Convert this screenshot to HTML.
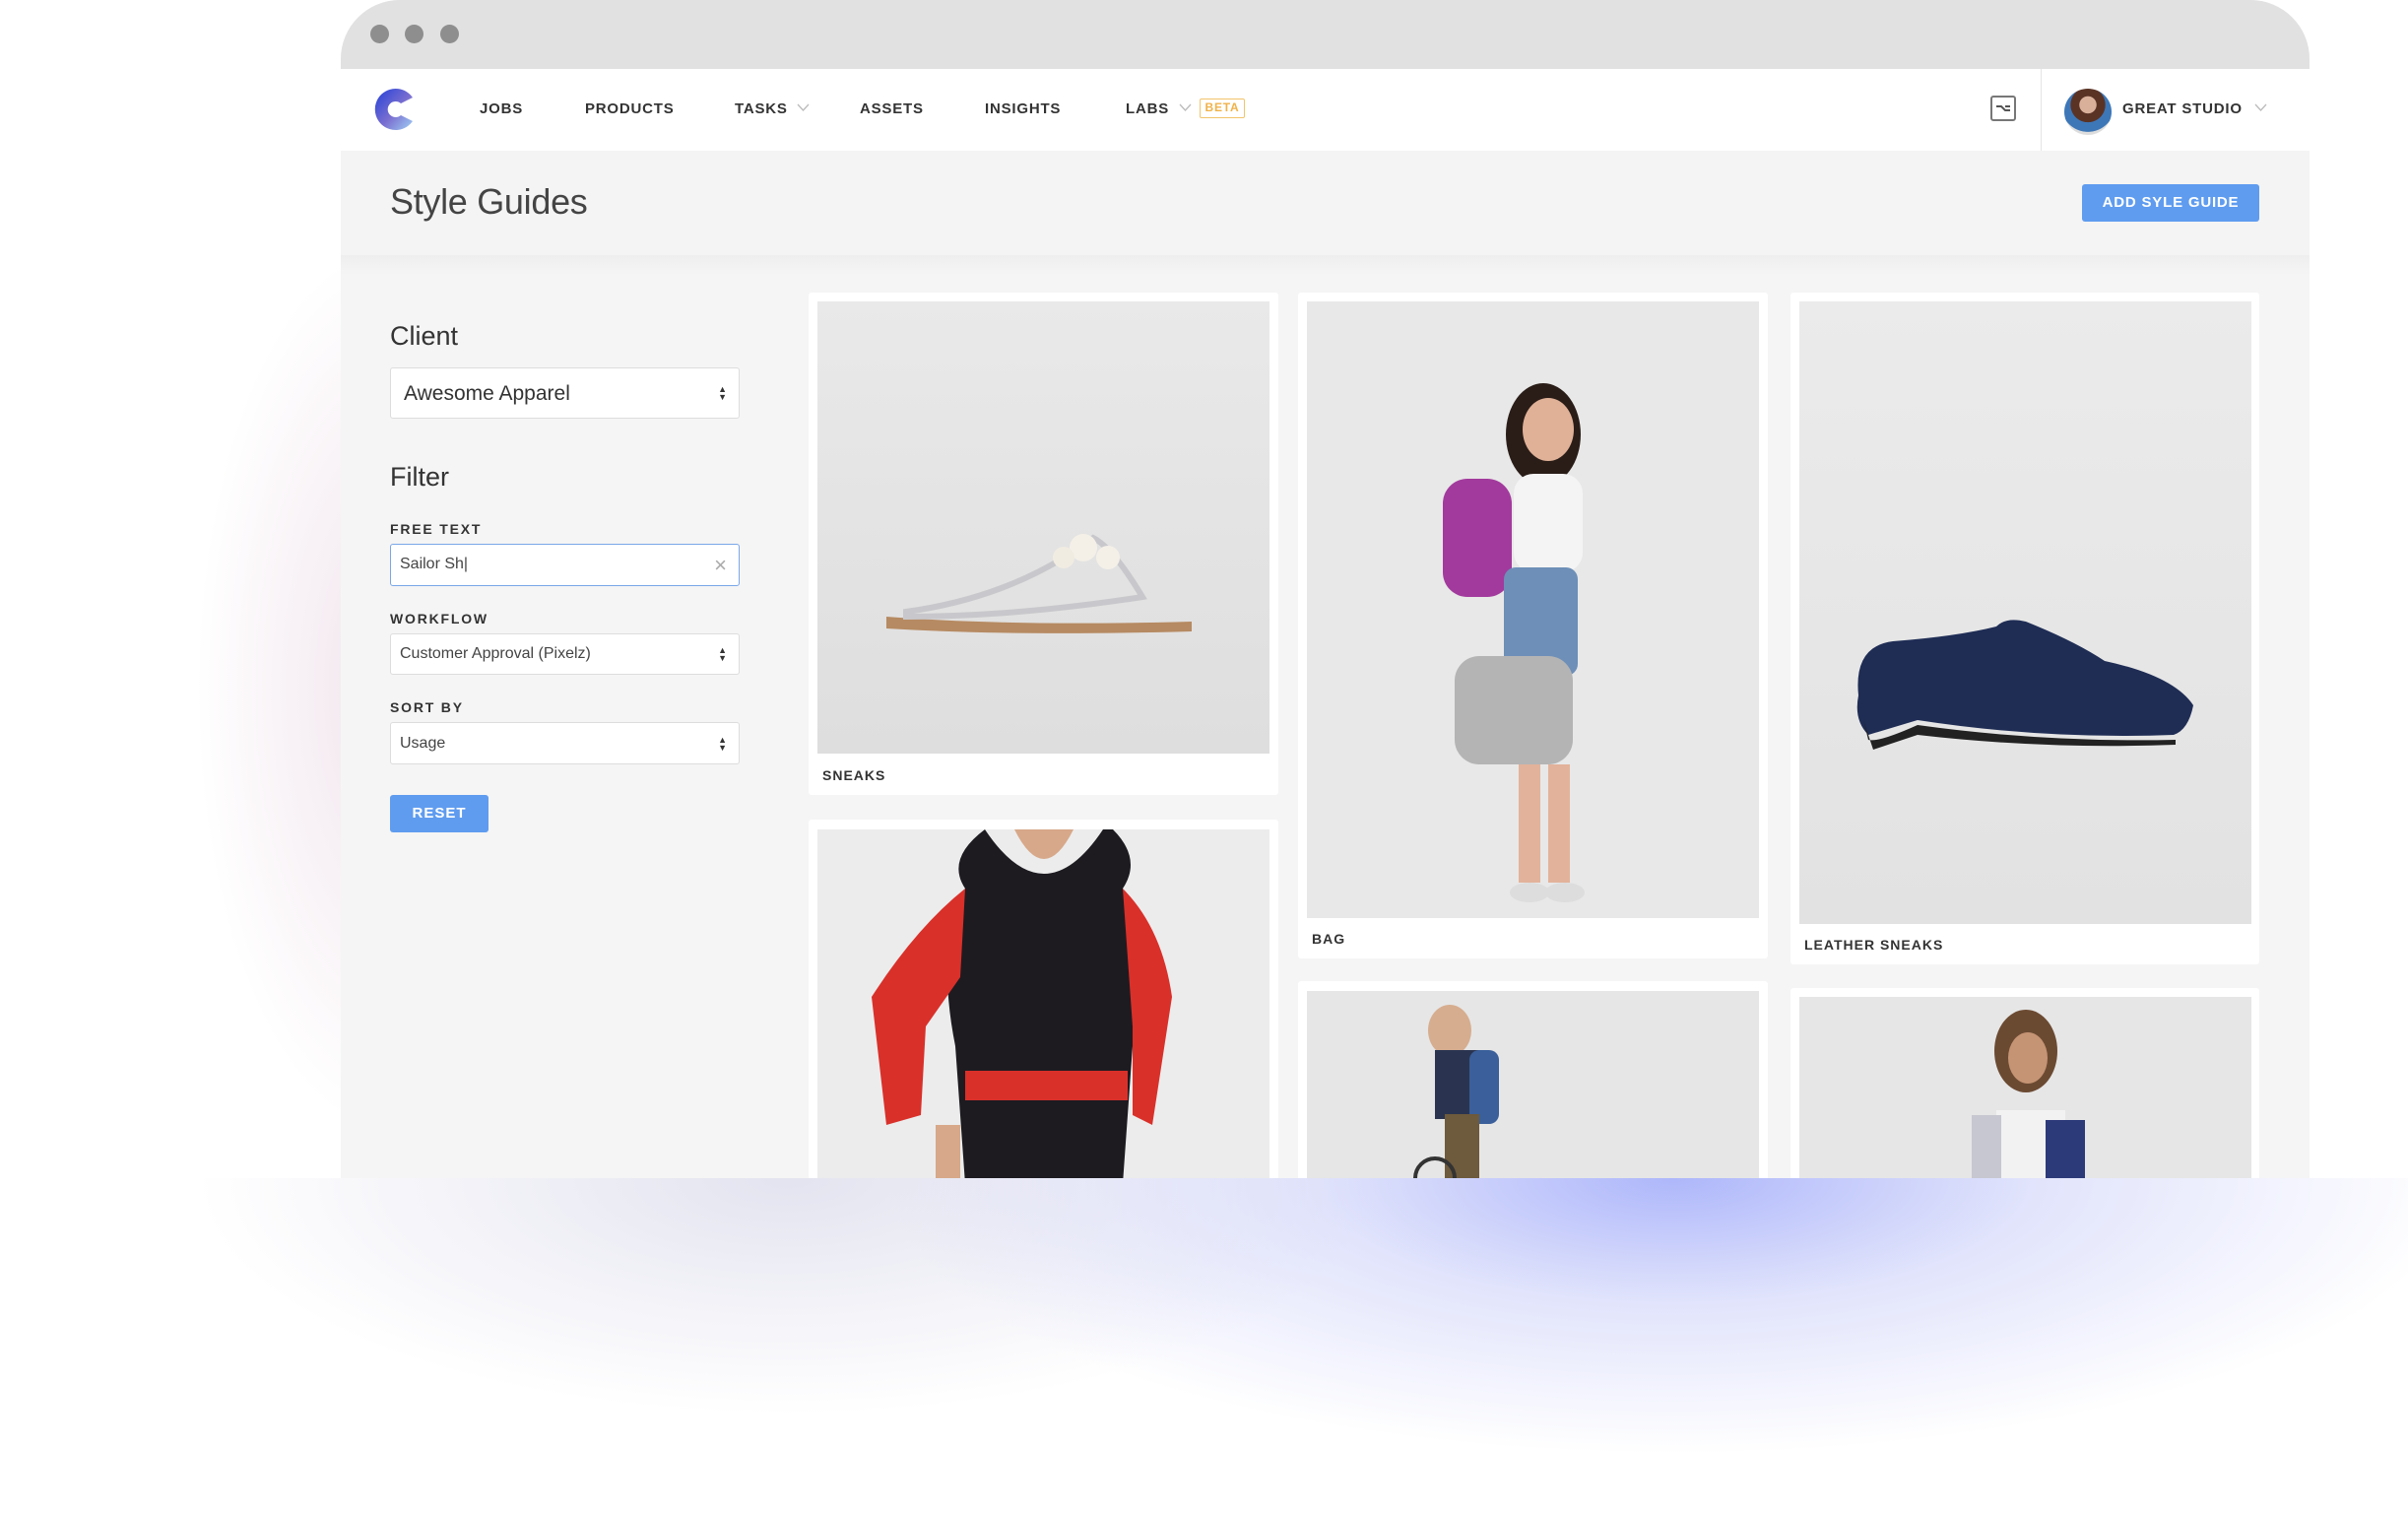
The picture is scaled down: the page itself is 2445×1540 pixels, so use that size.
<!DOCTYPE html>
<html><head><meta charset="utf-8"><style>
*{margin:0;padding:0;box-sizing:border-box}
body{width:2445px;height:1540px;background:#fff;position:relative;overflow:hidden;font-family:"Liberation Sans",sans-serif}
.abs{position:absolute}
.glow1{left:0;top:1196px;width:2445px;height:344px;background:radial-gradient(ellipse 800px 280px at 1700px 0px,rgba(165,175,250,.9),rgba(195,200,248,.5) 45%,rgba(255,255,255,0) 100%)}
.glow2{left:0;top:1196px;width:1500px;height:344px;background:radial-gradient(ellipse 600px 240px at 800px 0px,rgba(200,200,225,.5),rgba(255,255,255,0) 100%)}
.glow3{left:0;top:150px;width:500px;height:1100px;background:radial-gradient(ellipse 200px 450px at 400px 550px,rgba(228,205,220,.55),rgba(255,255,255,0) 100%)}
.win{left:346px;top:0;width:1999px;height:1196px;background:#f5f5f5;border-radius:60px 60px 0 0;overflow:hidden}
.chrome{left:0;top:0;width:100%;height:70px;background:#e1e1e1}
.dot{top:25px;width:19px;height:19px;border-radius:50%;background:#8e8e8e}
.nav{left:0;top:70px;width:100%;height:83px;background:#fff}
.ni{top:102px;font-size:15px;font-weight:bold;color:#333;letter-spacing:.8px}
.hdr{left:0;top:153px;width:100%;height:106px;background:#f4f4f4}
.card{background:#fff;border-radius:3px}
.lbl{font-size:14px;font-weight:bold;color:#333;letter-spacing:1px}
.flbl{font-size:14px;font-weight:bold;color:#333;letter-spacing:1.8px}
.sel{background:#fff;border:1px solid #ddd;border-radius:3px}
.arr{position:absolute;right:12px;top:50%;transform:translateY(-50%);font-size:9px;line-height:8px;color:#333}
</style></head><body>
<div class="abs glow3"></div>
<div class="abs glow2"></div>
<div class="abs glow1"></div>
<div class="abs win">
 <div class="abs chrome"></div>
 <div class="abs dot" style="left:30px"></div>
 <div class="abs dot" style="left:65px"></div>
 <div class="abs dot" style="left:101px"></div>
 <div class="abs nav"></div>
 <svg class="abs" style="left:31px;top:87px" width="44" height="48" viewBox="0 0 44 48"><defs><linearGradient id="lg" x1="0" y1="0" x2="1" y2="1"><stop offset="0" stop-color="#2340d8"/><stop offset=".55" stop-color="#7a6fd0"/><stop offset="1" stop-color="#9fd0f5"/></linearGradient></defs><path d="M42 12 A21 21 0 1 0 42 36 L30 30 A8 8 0 1 1 30 18 Z" fill="url(#lg)"/></svg>
 <div class="abs ni" style="left:141px">JOBS</div>
 <div class="abs ni" style="left:248px">PRODUCTS</div>
 <div class="abs ni" style="left:400px">TASKS</div>
 <svg class="abs" style="left:463px;top:105px" width="13" height="8"><path d="M1 1 L6.5 7 L12 1" stroke="#bbb" fill="none" stroke-width="1.3"/></svg>
 <div class="abs ni" style="left:527px">ASSETS</div>
 <div class="abs ni" style="left:654px">INSIGHTS</div>
 <div class="abs ni" style="left:797px">LABS</div>
 <svg class="abs" style="left:851px;top:105px" width="13" height="8"><path d="M1 1 L6.5 7 L12 1" stroke="#bbb" fill="none" stroke-width="1.3"/></svg>
 <div class="abs" style="left:872px;top:100px;width:46px;height:20px;border:1.5px solid #f2c46b;border-radius:2px;color:#f0b24a;font-size:12px;font-weight:bold;text-align:center;line-height:17px;letter-spacing:.8px">BETA</div>
 <svg class="abs" style="left:1675px;top:97px" width="26" height="26" viewBox="0 0 26 26"><rect x="1" y="1" width="24" height="24" rx="2" fill="none" stroke="#777" stroke-width="2"/><path d="M6 11 h5 l4 4 h5 M15 11 h5" stroke="#555" stroke-width="2" fill="none"/></svg>
 <div class="abs" style="left:1726px;top:70px;width:1px;height:83px;background:#e5e5e5"></div>
 <div class="abs" style="left:1750px;top:90px;width:48px;height:47px;border-radius:50%;background:radial-gradient(circle at 50% 35%,#d9b09a 0 22%,#5a3325 23% 45%,#3d77b8 46% 70%,#ddd 71%)"></div>
 <div class="abs ni" style="left:1809px">GREAT STUDIO</div>
 <svg class="abs" style="left:1943px;top:105px" width="13" height="8"><path d="M1 1 L6.5 7 L12 1" stroke="#bbb" fill="none" stroke-width="1.3"/></svg>
 <div class="abs hdr"></div>
 <div class="abs" style="left:50px;top:184px;font-size:36px;color:#444;letter-spacing:-.3px">Style Guides</div>
 <div class="abs" style="left:1768px;top:187px;width:180px;height:38px;background:#5f9cef;border-radius:3px;color:#fff;font-size:15px;font-weight:bold;text-align:center;line-height:38px;letter-spacing:.8px">ADD SYLE GUIDE</div>
 <div class="abs" style="left:0;top:259px;width:100%;height:20px;background:linear-gradient(#eeeeee,#f5f5f5)"></div>

 <div class="abs" style="left:50px;top:326px;font-size:27px;color:#333">Client</div>
 <div class="abs sel" style="left:50px;top:373px;width:355px;height:52px"><span class="abs" style="left:13px;top:14px;font-size:21px;color:#333">Awesome Apparel</span><div class="arr">▲<br>▼</div></div>
 <div class="abs" style="left:50px;top:469px;font-size:27px;color:#333">Filter</div>
 <div class="abs flbl" style="left:50px;top:529px">FREE TEXT</div>
 <div class="abs sel" style="left:50px;top:552px;width:355px;height:43px;border:1.5px solid #7aa7e8"><span class="abs" style="left:9px;top:11px;font-size:16px;color:#444">Sailor Sh|</span><span class="abs" style="right:12px;top:8px;font-size:22px;color:#aaa">×</span></div>
 <div class="abs flbl" style="left:50px;top:620px">WORKFLOW</div>
 <div class="abs sel" style="left:50px;top:643px;width:355px;height:42px"><span class="abs" style="left:9px;top:11px;font-size:16px;color:#444">Customer Approval (Pixelz)</span><div class="arr">▲<br>▼</div></div>
 <div class="abs flbl" style="left:50px;top:710px">SORT BY</div>
 <div class="abs sel" style="left:50px;top:733px;width:355px;height:43px"><span class="abs" style="left:9px;top:12px;font-size:16px;color:#444">Usage</span><div class="arr">▲<br>▼</div></div>
 <div class="abs" style="left:50px;top:807px;width:100px;height:38px;background:#5f9cef;border-radius:3px;color:#fff;font-size:15px;font-weight:bold;text-align:center;line-height:38px;letter-spacing:1px">RESET</div>

 <div class="abs card" style="left:475px;top:297px;width:477px;height:510px"></div>
 <div class="abs" style="left:484px;top:306px;width:459px;height:459px;background:linear-gradient(#e9e9e9,#dedede)">
  <svg width="459" height="459"><path d="M70 320 Q200 330 380 325 L380 335 Q200 340 70 332 Z" fill="#b68a62"/><path d="M90 315 Q200 300 280 240 Q300 250 330 300 Q200 320 90 320Z" fill="none" stroke="#c8c8cc" stroke-width="6"/><circle cx="270" cy="250" r="14" fill="#f4f0e8"/><circle cx="295" cy="260" r="12" fill="#f4f0e8"/><circle cx="250" cy="260" r="11" fill="#f1ece2"/></svg>
 </div>
 <div class="abs lbl" style="left:489px;top:779px">SNEAKS</div>
 <div class="abs card" style="left:475px;top:832px;width:477px;height:400px"></div>
 <div class="abs" style="left:484px;top:842px;width:459px;height:360px;background:#ececec;overflow:hidden">
  <svg width="459" height="360"><path d="M170 0 Q230 90 290 0 L300 0 Q330 30 310 60 Q330 120 320 220 L310 360 L150 360 L140 220 Q120 120 150 60 Q130 30 170 0Z" fill="#1d1b20"/><path d="M150 60 Q100 100 55 170 L70 300 L105 290 L110 200 L145 150Z" fill="#d9302a"/><path d="M310 60 Q350 100 360 170 L340 300 L320 290 L320 200Z" fill="#d9302a"/><rect x="150" y="245" width="165" height="30" fill="#d9302a"/><path d="M200 0 Q230 60 260 0Z" fill="#d7a889"/><rect x="120" y="300" width="25" height="60" fill="#d7a889"/></svg>
 </div>
 <div class="abs card" style="left:972px;top:297px;width:477px;height:676px"></div>
 <div class="abs" style="left:981px;top:306px;width:459px;height:626px;background:#e8e8e8">
  <svg width="459" height="626"><ellipse cx="240" cy="135" rx="38" ry="52" fill="#2a1d18"/><ellipse cx="245" cy="130" rx="26" ry="32" fill="#e0b197"/><rect x="210" y="175" width="70" height="100" rx="20" fill="#f4f4f4"/><rect x="138" y="180" width="70" height="120" rx="25" fill="#a23a9d"/><rect x="200" y="270" width="75" height="110" rx="12" fill="#6d8fb8"/><rect x="150" y="360" width="120" height="110" rx="25" fill="#b4b4b4"/><rect x="215" y="470" width="22" height="120" fill="#e2b29a"/><rect x="245" y="470" width="22" height="120" fill="#e2b29a"/><ellipse cx="226" cy="600" rx="20" ry="10" fill="#ddd"/><ellipse cx="262" cy="600" rx="20" ry="10" fill="#ddd"/></svg>
 </div>
 <div class="abs lbl" style="left:986px;top:945px">BAG</div>
 <div class="abs card" style="left:972px;top:996px;width:477px;height:240px"></div>
 <div class="abs" style="left:981px;top:1006px;width:459px;height:200px;background:#e6e6e6">
  <svg width="459" height="200"><ellipse cx="145" cy="40" rx="22" ry="26" fill="#d6ad8f"/><rect x="130" y="60" width="45" height="70" fill="#2a3450"/><rect x="165" y="60" width="30" height="75" rx="10" fill="#3a5f9a"/><rect x="140" y="125" width="35" height="75" fill="#6e5a3c"/><circle cx="130" cy="190" r="20" fill="none" stroke="#333" stroke-width="4"/></svg>
 </div>
 <div class="abs card" style="left:1472px;top:297px;width:476px;height:682px"></div>
 <div class="abs" style="left:1481px;top:306px;width:459px;height:632px;background:linear-gradient(#ebebeb,#e2e2e2)">
  <svg width="459" height="632"><path d="M60 400 Q55 350 95 345 Q160 340 200 330 Q210 320 230 325 Q280 345 310 365 Q380 380 400 410 Q395 435 380 440 Q250 445 120 425 L70 440 Q55 425 60 400Z" fill="#1f2d55"/><path d="M65 425 L70 445 Q80 448 120 430 Q250 448 382 445 L382 450 Q250 455 120 440 L75 455Z" fill="#222"/></svg>
 </div>
 <div class="abs lbl" style="left:1486px;top:951px">LEATHER SNEAKS</div>
 <div class="abs card" style="left:1472px;top:1003px;width:476px;height:240px"></div>
 <div class="abs" style="left:1481px;top:1012px;width:459px;height:200px;background:#e6e6e6">
  <svg width="459" height="200"><ellipse cx="230" cy="55" rx="32" ry="42" fill="#6b4a32"/><ellipse cx="232" cy="62" rx="20" ry="26" fill="#c59474"/><rect x="200" y="115" width="70" height="85" fill="#f2f2f2"/><rect x="175" y="120" width="30" height="80" fill="#c7c7d1"/><rect x="250" y="125" width="40" height="75" fill="#2d3a7a"/></svg>
 </div>
</div>
</body></html>
